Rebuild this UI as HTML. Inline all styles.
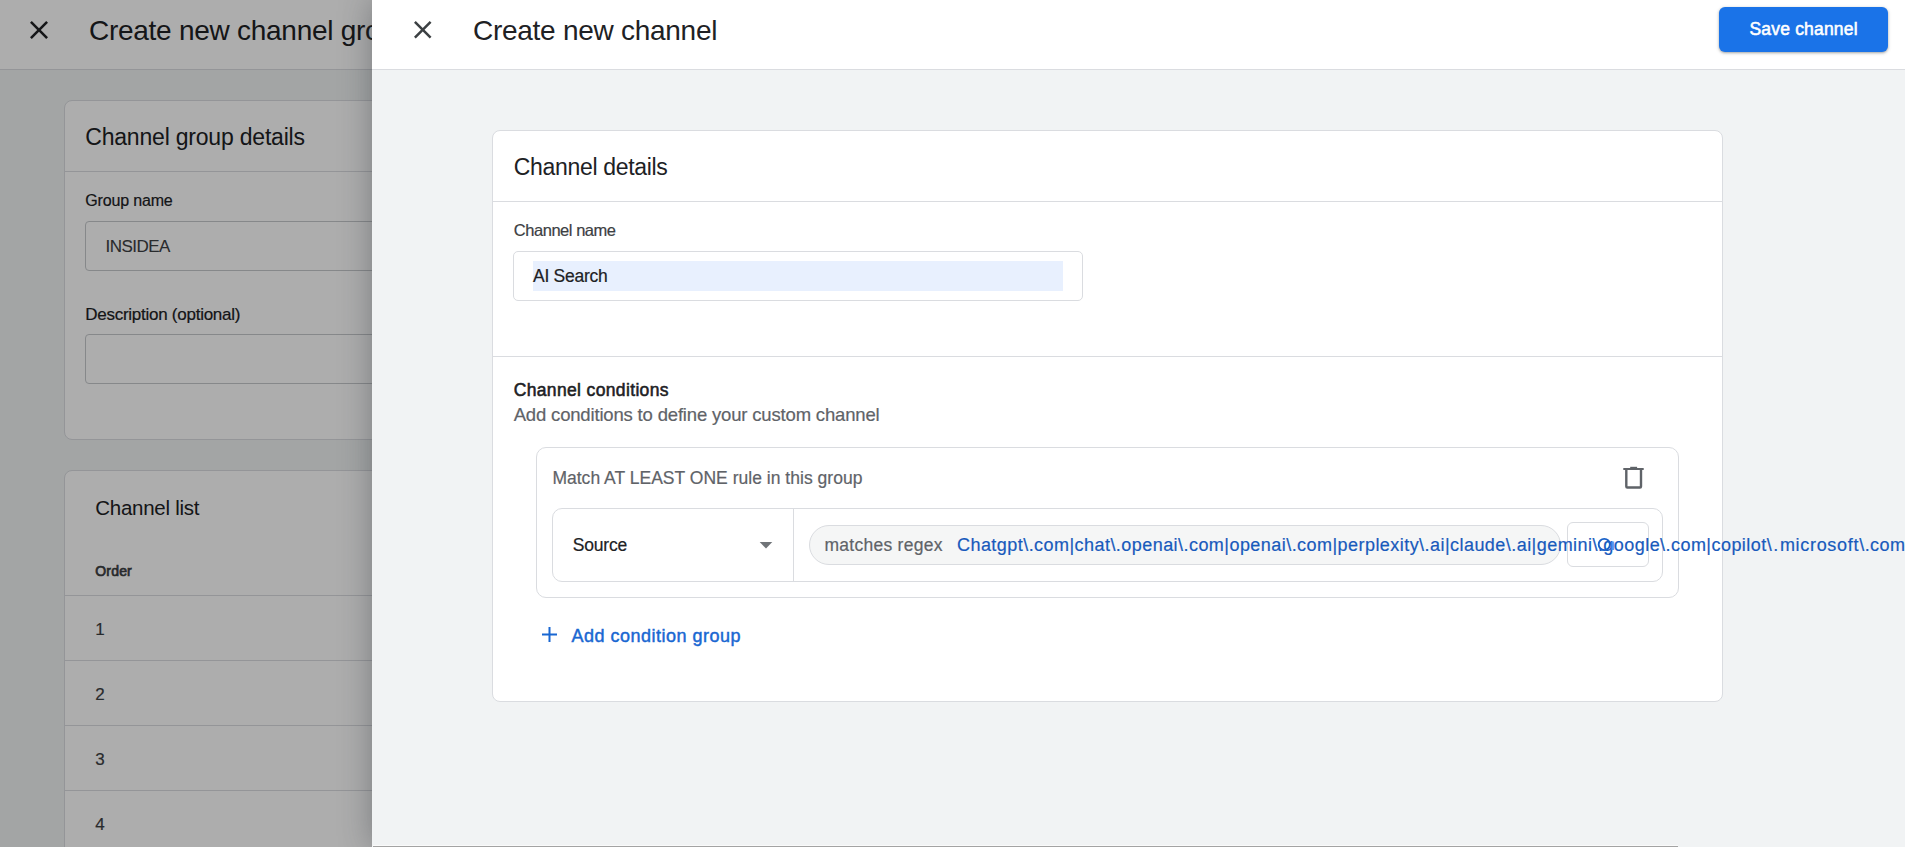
<!DOCTYPE html>
<html><head><meta charset="utf-8">
<style>
*{box-sizing:border-box;margin:0;padding:0}
html,body{width:1905px;height:847px;overflow:hidden;background:#f1f3f4;font-family:"Liberation Sans",sans-serif;color:#202124}
.abs{position:absolute}
.t{position:absolute;white-space:nowrap;line-height:1}
.box{position:absolute;border:1px solid #dadce0}
.card{position:absolute;background:#fff;border:1px solid #dadce0;border-radius:8px}
</style></head><body>

<div class="abs" style="left:0;top:0;width:1905px;height:847px;background:#f1f3f4">
<div class="abs" style="left:0;top:0;width:1905px;height:70px;background:#fff;border-bottom:1px solid #dadce0"></div>
<svg class="abs" style="left:30px;top:21px;width:18px;height:18px" viewBox="5 5 14 14"><path d="M19 6.41L17.59 5 12 10.59 6.41 5 5 6.41 10.59 12 5 17.59 6.41 19 12 13.41 17.59 19 19 17.59 13.41 12z" fill="#202124"/></svg>
<div class="t" style="left:89.00px;top:16.58px;font-size:28px;color:#202124;letter-spacing:-0.270px;">Create new channel group</div>
<div class="card" style="left:64px;top:100px;width:700px;height:340px"></div>
<div class="abs" style="left:65px;top:171px;width:700px;height:1px;background:#dadce0"></div>
<div class="t" style="left:85.30px;top:125.82px;font-size:23px;color:#202124;letter-spacing:-0.205px;">Channel group details</div>
<div class="t" style="left:85.30px;top:192.95px;font-size:16px;color:#202124;-webkit-text-stroke:0.2px #202124;letter-spacing:-0.167px;">Group name</div>
<div class="box" style="left:85px;top:221px;width:600px;height:50px;border-radius:4px;border-color:#c6c9cc"></div>
<div class="t" style="left:105.50px;top:238.10px;font-size:17px;color:#3c4043;-webkit-text-stroke:0.1px #3c4043;letter-spacing:-0.517px;">INSIDEA</div>
<div class="t" style="left:85.20px;top:306.20px;font-size:17px;color:#202124;-webkit-text-stroke:0.2px #202124;letter-spacing:-0.257px;">Description (optional)</div>
<div class="box" style="left:85px;top:334px;width:600px;height:50px;border-radius:4px;border-color:#c6c9cc"></div>
<div class="card" style="left:64px;top:470px;width:700px;height:500px"></div>
<div class="t" style="left:95.20px;top:498.04px;font-size:20.5px;color:#202124;letter-spacing:-0.255px;">Channel list</div>
<div class="t" style="left:95.20px;top:564.24px;font-size:14px;color:#3c4043;-webkit-text-stroke:0.55px #3c4043;letter-spacing:0.200px;-webkit-text-stroke:0.7px #3c4043;">Order</div>
<div class="abs" style="left:65px;top:595px;width:700px;height:1px;background:#dadce0"></div>
<div class="t" style="left:95.30px;top:621.00px;font-size:17px;color:#3c4043;-webkit-text-stroke:0.2px #3c4043;">1</div>
<div class="abs" style="left:65px;top:660px;width:700px;height:1px;background:#dadce0"></div>
<div class="t" style="left:95.30px;top:686.00px;font-size:17px;color:#3c4043;-webkit-text-stroke:0.2px #3c4043;">2</div>
<div class="abs" style="left:65px;top:725px;width:700px;height:1px;background:#dadce0"></div>
<div class="t" style="left:95.30px;top:751.00px;font-size:17px;color:#3c4043;-webkit-text-stroke:0.2px #3c4043;">3</div>
<div class="abs" style="left:65px;top:790px;width:700px;height:1px;background:#dadce0"></div>
<div class="t" style="left:95.30px;top:816.00px;font-size:17px;color:#3c4043;-webkit-text-stroke:0.2px #3c4043;">4</div>
</div>
<div class="abs" style="left:0;top:0;width:1905px;height:847px;background:rgba(0,0,0,0.32)"></div>
<div class="abs" style="left:372px;top:0;width:1533px;height:847px;background:#f1f3f4;box-shadow:0 0 30px rgba(40,44,52,0.38)"></div>
<div class="abs" style="left:372px;top:0;width:1533px;height:70px;background:#fff;border-bottom:1px solid #dadce0"></div>
<svg class="abs" style="left:414px;top:21px;width:17.5px;height:17.5px" viewBox="5 5 14 14"><path d="M19 6.41L17.59 5 12 10.59 6.41 5 5 6.41 10.59 12 5 17.59 6.41 19 12 13.41 17.59 19 19 17.59 13.41 12z" fill="#3c4043"/></svg>
<div class="t" style="left:473.00px;top:16.58px;font-size:28px;color:#202124;letter-spacing:-0.271px;">Create new channel</div>
<div class="abs" style="left:1719px;top:7px;width:169px;height:45px;background:#1a73e8;border-radius:6px;box-shadow:0 1px 2px rgba(60,64,67,.3),0 1px 3px 1px rgba(60,64,67,.15)"></div>
<div class="t" style="left:1749.50px;top:21.18px;font-size:17.5px;color:#fff;-webkit-text-stroke:0.55px #fff;letter-spacing:0.182px;">Save channel</div>
<div class="card" style="left:492px;top:130px;width:1231px;height:572px"></div>
<div class="abs" style="left:493px;top:201px;width:1229px;height:1px;background:#dadce0"></div>
<div class="abs" style="left:493px;top:356px;width:1229px;height:1px;background:#dadce0"></div>
<div class="t" style="left:513.80px;top:155.82px;font-size:23px;color:#202124;letter-spacing:-0.329px;">Channel details</div>
<div class="t" style="left:513.80px;top:222.12px;font-size:16.5px;color:#3c4043;-webkit-text-stroke:0.2px #3c4043;letter-spacing:-0.464px;">Channel name</div>
<div class="box" style="left:513px;top:251px;width:570px;height:50px;border-radius:5px"></div>
<div class="abs" style="left:533px;top:261px;width:530px;height:30px;background:#e8f0fe"></div>
<div class="t" style="left:533.00px;top:267.88px;font-size:17.5px;color:#202124;-webkit-text-stroke:0.2px #202124;letter-spacing:-0.275px;">AI Search</div>
<div class="t" style="left:513.70px;top:381.58px;font-size:17.5px;color:#202124;-webkit-text-stroke:0.55px #202124;letter-spacing:0.353px;">Channel conditions</div>
<div class="t" style="left:513.70px;top:405.93px;font-size:18.5px;color:#5f6368;-webkit-text-stroke:0.2px #5f6368;letter-spacing:-0.172px;">Add conditions to define your custom channel</div>
<div class="box" style="left:536px;top:447px;width:1143px;height:151px;border-radius:10px"></div>
<div class="t" style="left:552.40px;top:469.98px;font-size:17.5px;color:#5f6368;-webkit-text-stroke:0.2px #5f6368;letter-spacing:0.019px;">Match AT LEAST ONE rule in this group</div>
<svg class="abs" style="left:1620px;top:464px;width:28px;height:28px" viewBox="1620 464 28 28">
<rect x="1623.3" y="468" width="20.4" height="2" fill="#5f6368"/>
<rect x="1630.2" y="466.8" width="6.9" height="1.5" fill="#5f6368"/>
<path d="M1626.3 470 V486.5 Q1626.3 487.5 1627.3 487.5 H1640 Q1641 487.5 1641 486.5 V470" fill="none" stroke="#5f6368" stroke-width="2.4"/>
</svg>
<div class="box" style="left:552px;top:508px;width:1111px;height:74px;border-radius:10px"></div>
<div class="abs" style="left:793px;top:509px;width:1px;height:72px;background:#dadce0"></div>
<div class="t" style="left:572.80px;top:536.88px;font-size:17.5px;color:#202124;-webkit-text-stroke:0.2px #202124;letter-spacing:-0.220px;">Source</div>
<svg class="abs" style="left:759px;top:542px;width:14px;height:7px" viewBox="0 0 14 7"><path d="M0.7 0 L13.3 0 L7 6.6z" fill="#707478"/></svg>
<div class="box" style="left:809px;top:525px;width:752px;height:40px;border-radius:20px;background:#f5f6f6"></div>
<div class="box" style="left:1567px;top:522px;width:82px;height:45px;border-radius:6px;background:#fff"></div>
<div class="t" style="left:824.40px;top:536.58px;font-size:17.5px;color:#5f6368;-webkit-text-stroke:0.2px #5f6368;letter-spacing:0.275px;">matches regex</div>
<div class="t" style="left:957.00px;top:536.15px;font-size:18px;color:#185abc;-webkit-text-stroke:0.2px #185abc;letter-spacing:0.450px;">Chatgpt\.com|chat\.openai\.com|openai\.com|perplexity\.ai|claude\.ai|gemini\.google\.com|copilot<span style='letter-spacing:1.6px'>\.</span><span style='letter-spacing:0.7px'>microsoft</span>\.com</div>
<svg class="abs" style="left:1590px;top:530px;width:30px;height:30px" viewBox="1590 530 30 30"><circle cx="1604.3" cy="544.5" r="5.6" fill="none" stroke="#1a62c9" stroke-width="1.9"/><rect x="1611" y="541.5" width="3.2" height="8.5" fill="#3d84f0" opacity="0.8"/></svg>
<svg class="abs" style="left:541px;top:626px;width:17px;height:17px" viewBox="0 0 17 17"><path d="M8.5 1 V16 M1 8.5 H16" stroke="#1967d2" stroke-width="2"/></svg>
<div class="t" style="left:571.40px;top:626.65px;font-size:18px;color:#1967d2;-webkit-text-stroke:0.55px #1967d2;letter-spacing:0.500px;-webkit-text-stroke:0.45px #1967d2;">Add condition group</div>
<div class="abs" style="left:373px;top:845px;width:1305px;height:1px;background:#fafafa"></div>
<div class="abs" style="left:373px;top:846px;width:1305px;height:1px;background:#a3a3a3"></div>
</body></html>
